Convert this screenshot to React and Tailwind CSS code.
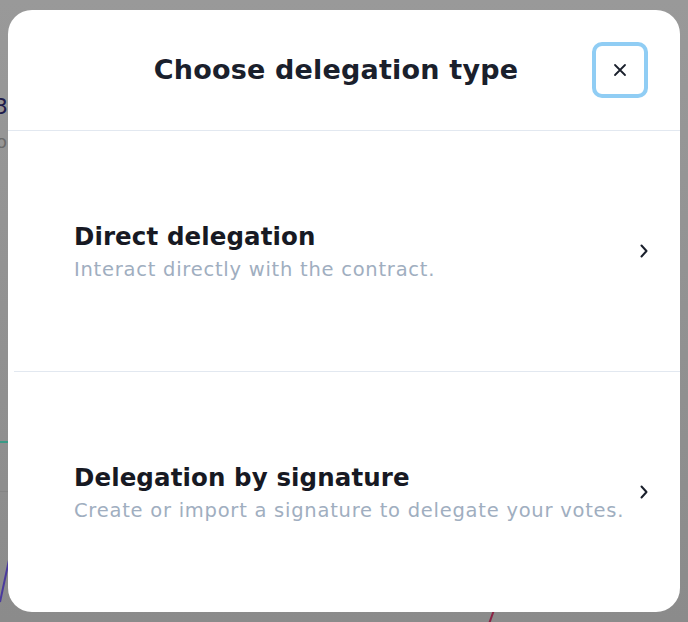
import React from 'react';

const options = [
  { title: 'Direct delegation', desc: 'Interact directly with the contract.' },
  { title: 'Delegation by signature', desc: 'Create or import a signature to delegate your votes.' },
];

function Chevron() {
  return (
    <svg width="10" height="16" viewBox="0 0 10 16" fill="none" stroke="#1a202c" strokeWidth="2" strokeLinecap="round" strokeLinejoin="round">
      <path d="M2.5 2.5 L7.5 8 L2.5 13.5" />
    </svg>
  );
}

export default function App() {
  return (
    <div className="relative w-[688px] h-[622px] overflow-hidden bg-gradient-to-b from-[#999999] to-[#8b8b8b] font-['DejaVu_Sans',sans-serif]">
      {/* page behind the backdrop */}
      <span className="absolute left-[-6px] top-[90px] text-[22px] text-[#1e1b4b]">3</span>
      <span className="absolute left-[-4px] top-[128px] text-[18px] text-[#6b6b6b]">o</span>
      <div className="absolute left-0 top-[441px] w-[10px] h-[2px] bg-[#3a9a86]" />
      <div className="absolute left-0 top-[491px] w-[10px] h-px bg-[#858585]" />
      <svg className="absolute left-0 top-[560px]" width="10" height="44"><path d="M9 0 L0 42" stroke="#4a3a9e" strokeWidth="2" /></svg>
      <svg className="absolute left-[486px] top-[610px]" width="10" height="14"><path d="M8 0 L3 14" stroke="#8b2345" strokeWidth="2" /></svg>

      <div className="absolute left-[8px] top-[10px] w-[672px] h-[602px] bg-white rounded-[24px] flex flex-col">
        <div className="h-[121px] shrink-0 border-b border-[#e2e8f0] flex items-center relative">
          <h2 className="w-full text-center pr-[16px] text-[27px] font-semibold text-[#1a202c] tracking-[0.2px]">Choose delegation type</h2>
          <button className="absolute right-[32px] top-[32px] w-[56px] h-[56px] rounded-[10px] border-[4px] border-[#90cdf4] bg-white flex items-center justify-center">
            <svg width="14" height="14" viewBox="0 0 14 14" stroke="#1a202c" strokeWidth="1.8" strokeLinecap="round">
              <path d="M2 2 L12 12 M12 2 L2 12" />
            </svg>
          </button>
        </div>
        {options.map((o, i) => (
          <div key={i} className={i === 0 ? 'flex-1 flex items-center ml-[6px] pl-[60px] pr-[31px] border-b border-[#e2e8f0]' : 'flex-1 flex items-center pl-[66px] pr-[31px]'}>
            <div className="flex-1 pt-[2px]">
              <div className="text-[24.5px] font-semibold text-[#171923] leading-[32px] tracking-[0.1px]">{o.title}</div>
              <div className="text-[19.5px] text-[#a0aec0] leading-[28px] tracking-[0.75px] mt-[3px]">{o.desc}</div>
            </div>
            <Chevron />
          </div>
        ))}
      </div>
    </div>
  );
}
